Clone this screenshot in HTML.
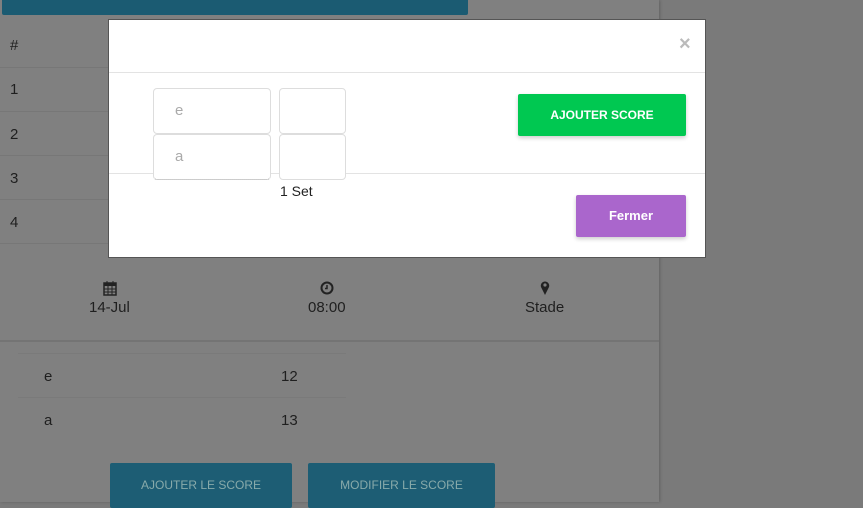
<!DOCTYPE html>
<html><head><style>
*{box-sizing:border-box;margin:0;padding:0}
body{width:863px;height:502px;overflow:hidden;background:#7a7a7a;font-family:"Liberation Sans",sans-serif;position:relative;color:#1f1f1f}
.abs{position:absolute}
.card{left:0;top:0;width:659px;height:502px;background:#808080;box-shadow:1px 0 3px rgba(0,0,0,.2)}
.topbar{left:2px;top:0;width:466px;height:15px;background:#1b5b72;border-radius:0 0 2px 2px}
.row{left:0;width:659px;border-top:1px solid #777}
.t{font-size:15px}
.btn{background:#1d5d74;color:#8aa;font-size:12px;text-align:center;line-height:40px;border-radius:2px}
.modal{left:108px;top:19px;width:598px;height:239px;background:#fff;border:1px solid #555}
.inp{border:1px solid #ddd;border-radius:4px;background:#fff;color:#aaa;font-size:15px;padding-left:21px;line-height:44px}
</style></head><body>
<div class="abs card"></div>
<div class="abs topbar"></div>
<div class="abs t" style="left:10px;top:37px">#</div>
<div class="abs row" style="top:67px"></div>
<div class="abs t" style="left:10px;top:81px">1</div>
<div class="abs row" style="top:111px"></div>
<div class="abs t" style="left:10px;top:126px">2</div>
<div class="abs row" style="top:155px"></div>
<div class="abs t" style="left:10px;top:170px">3</div>
<div class="abs row" style="top:199px"></div>
<div class="abs t" style="left:10px;top:214px">4</div>
<div class="abs row" style="top:243px"></div>
<svg class="abs" style="left:103px;top:280px" width="14" height="16" viewBox="0 0 14 16"><rect x="1" y="3" width="12" height="12" fill="none" stroke="#222" stroke-width="1.5"/><rect x="1" y="3" width="12" height="3" fill="#222"/><path d="M4 1v4M10 1v4M1 9h12M1 12h12M5 6v9M9 6v9" stroke="#222"/></svg>
<div class="abs t" style="left:89px;top:299px">14-Jul</div>
<svg class="abs" style="left:320px;top:281px" width="14" height="14"><circle cx="7" cy="7" r="5.5" fill="none" stroke="#222" stroke-width="2"/><path d="M7 4v3.5H5" stroke="#222" stroke-width="1.5" fill="none"/></svg>
<div class="abs t" style="left:308px;top:299px">08:00</div>
<svg class="abs" style="left:540px;top:280px" width="10" height="15"><path d="M5 15L1 7A4.2 4.2 0 1 1 9 7Z" fill="#222"/><circle cx="5" cy="5" r="1.6" fill="#808080"/></svg>
<div class="abs t" style="left:525px;top:299px">Stade</div>
<div class="abs" style="left:0;top:340px;width:659px;border-top:2px solid #747474"></div>
<div class="abs" style="left:18px;top:353px;width:328px;border-top:1px solid #7a7a7a"></div>
<div class="abs t" style="left:44px;top:368px">e</div>
<div class="abs t" style="left:281px;top:368px">12</div>
<div class="abs" style="left:18px;top:397px;width:328px;border-top:1px solid #7a7a7a"></div>
<div class="abs t" style="left:44px;top:412px">a</div>
<div class="abs t" style="left:281px;top:412px">13</div>
<div class="abs btn" style="left:110px;top:463px;width:182px;height:45px;line-height:44px">AJOUTER LE SCORE</div>
<div class="abs btn" style="left:308px;top:463px;width:187px;height:45px;line-height:44px">MODIFIER LE SCORE</div>

<div class="abs modal">
  <div class="abs" style="left:570px;top:13px;color:#bbb;font-size:20px;font-weight:bold">×</div>
  <div class="abs" style="left:0;top:52px;width:596px;border-top:1px solid #e3e3e3"></div>
  <div class="abs" style="left:0;top:153px;width:596px;border-top:1px solid #e3e3e3"></div>
  <div class="abs inp" style="left:44px;top:68px;width:118px;height:46px">e</div>
  <div class="abs inp" style="left:44px;top:114px;width:118px;height:46px;border-bottom:1px dotted #999">a</div>
  <div class="abs inp" style="left:170px;top:68px;width:67px;height:46px"></div>
  <div class="abs inp" style="left:170px;top:114px;width:67px;height:46px"></div>
  <div class="abs" style="left:171px;top:163px;font-size:14px;color:#222">1 Set</div>
  <div class="abs" style="left:409px;top:74px;width:168px;height:42px;background:#00c851;color:#fff;font-size:12px;font-weight:bold;text-align:center;line-height:42px;border-radius:2px;box-shadow:0 2px 4px rgba(0,0,0,.2)">AJOUTER SCORE</div>
  <div class="abs" style="left:467px;top:175px;width:110px;height:42px;background:#aa66cc;color:#fff;font-size:13px;font-weight:bold;text-align:center;line-height:42px;border-radius:2px;box-shadow:0 2px 4px rgba(0,0,0,.2)">Fermer</div>
</div>
</body></html>
